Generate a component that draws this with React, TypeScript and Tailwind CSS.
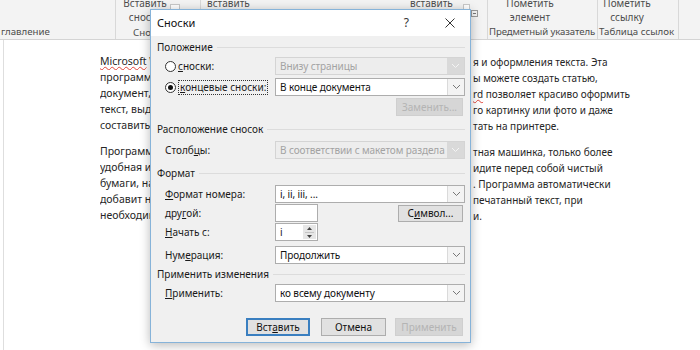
import React from 'react'

const lines1 = [
  { left: 'Microsoft Word – это программа для набора, редактировани', tail: 'я и оформления текста. Эта', wavy: true },
  { left: 'программа очень популярна среди пользователей. С ее помощью в', tail: 'ы можете создать статью,' },
  { left: 'документ, доклад, реферат или курсовую работу. Программа Wo', tail: 'rd позволяет красиво оформить', wavyTail: true },
  { left: 'текст, выделить важные моменты, вставить в не', tail: 'го картинку или фото и даже' },
  { left: 'составить таблицу. Готовый документ можно распеча', tail: 'тать на принтере.' },
]

const lines2 = [
  { left: 'Программа Word – это как современная печа', tail: 'тная машинка, только более' },
  { left: 'удобная и функциональная. Открыв документ, вы ув', tail: 'идите перед собой чистый' },
  { left: 'бумаги, на котором можно набирать любой текст', tail: '. Программа автоматически' },
  { left: 'добавит новую страницу, сохранит и рас', tail: 'печатанный текст, при' },
  { left: 'необходимости проверит орфографию и исправит ошибк', tail: 'и.' },
]

function Chevron() {
  return (
    <svg width="9" height="6" viewBox="0 0 9 6">
      <path d="M1 1 L4.5 4.5 L8 1" fill="none" stroke="currentColor" strokeWidth="1" />
    </svg>
  )
}

function Select({ value, disabled = false }: { value: string; disabled?: boolean }) {
  return (
    <div
      className={`flex h-[18px] w-[190px] border ${
        disabled ? 'border-[#d4d4d4] bg-[#ededed] text-[#a3a3a3]' : 'border-[#adadad] bg-white text-[#111]'
      }`}
    >
      <div className="flex-1 overflow-hidden whitespace-nowrap pl-[4px] leading-[16px] tracking-[-0.1px]">{value}</div>
      <div
        className={`flex w-[17px] shrink-0 items-center justify-center ${
          disabled ? 'bg-[#d9d9d9] text-[#f4f4f4]' : 'border-l border-[#dadada] bg-[#f3f3f3] text-[#777]'
        }`}
      >
        <Chevron />
      </div>
    </div>
  )
}

function Btn({ children, kind = 'normal', className = '' }: { children: React.ReactNode; kind?: 'default' | 'normal' | 'disabled'; className?: string }) {
  const look =
    kind === 'default'
      ? 'border-2 border-[#3a7fc0] bg-[#e1e1e1] text-[#111]'
      : kind === 'disabled'
        ? 'border border-[#cfcfcf] bg-[#d6d6d6] text-[#b4b4b4]'
        : 'border border-[#adadad] bg-[#e1e1e1] text-[#111]'
  return <div className={`flex items-center justify-center ${look} ${className}`}>{children}</div>
}

function Group({ title, className = '' }: { title: string; className?: string }) {
  return (
    <div className={`flex h-[18px] items-center gap-[4px] pl-[6px] ${className}`}>
      <span>{title}</span>
      <div className="h-px flex-1 bg-[#dcdcdc]" />
    </div>
  )
}

function Row({ label, children, className = '' }: { label: React.ReactNode; children: React.ReactNode; className?: string }) {
  return (
    <div className={`flex h-[18px] items-center pl-[14px] ${className}`}>
      <div className="flex w-[110px] shrink-0 items-center">{label}</div>
      {children}
    </div>
  )
}

function Radio({ checked = false }: { checked?: boolean }) {
  return (
    <div className="mr-[2px] flex h-[11px] w-[11px] items-center justify-center rounded-full border border-[#333] bg-white">
      {checked && <div className="h-[5px] w-[5px] rounded-full bg-[#111]" />}
    </div>
  )
}

function DocLine({ left, tail, wavy, wavyTail }: { left: string; tail: string; wavy?: boolean; wavyTail?: boolean }) {
  const first = left.split(' ')[0]
  const rest = left.slice(first.length)
  return (
    <div className="flex h-[16px] items-center whitespace-nowrap">
      <div className="w-[372px] shrink-0 overflow-hidden text-[10.5px]">
        {wavy ? <span className="underline decoration-[#e0443a] decoration-wavy decoration-1">{first}</span> : first}
        {rest}
      </div>
      <div className="ml-[1px]">
        {wavyTail ? (
          <>
            <span className="underline decoration-[#e0443a] decoration-wavy decoration-1">{tail.slice(0, 2)}</span>
            {tail.slice(2)}
          </>
        ) : (
          tail
        )}
      </div>
    </div>
  )
}

function RibbonItem({ top, bottom, className = '' }: { top: string; bottom?: string; className?: string }) {
  return (
    <div className={`flex w-[50px] shrink-0 flex-col items-center ${className}`}>
      <span>{top}</span>
      {bottom && <span>{bottom}</span>}
    </div>
  )
}

export default function App() {
  return (
    <div className="relative h-[350px] w-[700px] overflow-hidden bg-white font-['Noto_Sans',sans-serif]">
      {/* ribbon */}
      <div className="flex h-[40px] whitespace-nowrap border-b border-[#d4d4d4] bg-[#f3f3f3] text-[10px] leading-[14px] text-[#4d4d4d]">
        <div className="flex w-[115px] shrink-0 flex-col justify-end overflow-hidden">
          <span className="pl-[1px] text-[9.7px]">главление</span>
        </div>
        <div className="w-px bg-[#d8d8d8]" />
        <div className="flex w-[371px] shrink-0 flex-col overflow-hidden">
          <div className="-mt-[4px] flex flex-1">
            <RibbonItem top="Вставить" bottom="сноску" className="ml-[4px]" />
            <div className="mt-[8px] h-[6px] w-[10px] border border-[#c8c8c8] bg-white" />
            <div className="ml-[20px] h-[30px] w-px bg-[#d8d8d8]" />
            <span className="ml-[6px] w-[46px]">вставить</span>
            <span className="ml-[157px] w-[46px]">вставить</span>
            <div className="ml-[7px] mt-[8px] h-[6px] w-[7px] border border-[#c8c8c8] bg-white" />
            <div className="ml-[1px] mt-[14px] flex h-[7px] w-[7px] items-center justify-center border border-[#9a9a9a]">
              <div className="h-px w-[3px] bg-[#777]" />
            </div>
          </div>
          <span className="pl-[17px] text-[9.7px]">Сноски</span>
        </div>
        <div className="w-px bg-[#d8d8d8]" />
        <div className="flex w-[109px] shrink-0 flex-col overflow-hidden">
          <div className="-mt-[4px] flex flex-1">
            <RibbonItem top="Пометить" bottom="элемент" className="ml-[17px]" />
          </div>
          <span className="pl-[1px] text-[9.6px] tracking-[-0.1px]">Предметный указатель</span>
        </div>
        <div className="w-px bg-[#d8d8d8]" />
        <div className="flex w-[80px] shrink-0 flex-col overflow-hidden">
          <div className="-mt-[4px] flex flex-1">
            <RibbonItem top="Пометить" bottom="ссылку" className="ml-[4px]" />
          </div>
          <span className="pl-[1px] text-[9.7px]">Таблица ссылок</span>
        </div>
        <div className="w-px bg-[#d8d8d8]" />
        <div className="flex-1" />
      </div>

      {/* document */}
      <div className="ml-[3px] h-[310px] border-l border-[#dedede] pl-[96px] pt-[14px] text-[10px] text-[#262626]">
        <div className="mb-[10px]">
          {lines1.map((l, i) => (
            <DocLine key={i} {...l} />
          ))}
        </div>
        <div>
          {lines2.map((l, i) => (
            <DocLine key={i} {...l} />
          ))}
        </div>
      </div>

      {/* dialog */}
      <div className="absolute left-[150px] top-[9px] z-10 flex h-[334px] w-[321px] flex-col border border-[#86b3d9] bg-[#f0f0f0] text-[10px] text-[#1a1a1a] shadow-[0_2px_10px_rgba(0,0,0,0.28)]">
        <div className="flex h-[26px] shrink-0 items-center bg-white pl-[6px] pr-[15px]">
          <span className="text-[11px] text-[#111]">Сноски</span>
          <span className="ml-auto mr-[36px] text-[12px] text-[#333]">?</span>
          <svg width="10" height="10" viewBox="0 0 10 10">
            <path d="M0.5 0.5 L9.5 9.5 M9.5 0.5 L0.5 9.5" stroke="#333" strokeWidth="1" />
          </svg>
        </div>

        <div className="flex flex-col pr-[5px]">
          <Group title="Положение" className="mt-[2px]" />
          <Row
            className="mt-[1px]"
            label={
              <>
                <Radio />
                <span>
                  <u>с</u>носки:
                </span>
              </>
            }
          >
            <Select value="Внизу страницы" disabled />
          </Row>
          <Row
            className="mt-[3px]"
            label={
              <>
                <Radio checked />
                <span className="border border-dotted border-[#333] px-[1px] leading-[13px]">
                  <u>к</u>онцевые сноски:
                </span>
              </>
            }
          >
            <Select value="В конце документа" />
          </Row>
          <div className="mt-[2px] flex justify-end">
            <Btn kind="disabled" className="mr-[2px] h-[18px] w-[67px]">
              Заменить...
            </Btn>
          </div>

          <Group title="Расположение сносок" className="mt-[4px]" />
          <Row
            className="mt-[3px]"
            label={
              <span>
                Столб<u>ц</u>ы:
              </span>
            }
          >
            <Select value="В соответствии с макетом раздела" disabled />
          </Row>

          <Group title="Формат" className="mt-[5px]" />
          <Row
            className="mt-[3px]"
            label={
              <span>
                <u>Ф</u>ормат номера:
              </span>
            }
          >
            <Select value="i, ii, iii, ..." />
          </Row>
          <Row
            className="mt-[1px]"
            label={
              <span>
                дру<u>г</u>ой:
              </span>
            }
          >
            <div className="h-[18px] w-[43px] border border-[#adadad] bg-white" />
            <Btn className="ml-auto mr-[2px] h-[17px] w-[65px]">
              <span>
                С<u>и</u>мвол...
              </span>
            </Btn>
          </Row>
          <Row
            className="mt-[1px]"
            label={
              <span>
                <u>Н</u>ачать с:
              </span>
            }
          >
            <div className="flex h-[18px] w-[43px] border border-[#adadad] bg-white">
              <span className="flex-1 pl-[4px] leading-[16px]">i</span>
              <div className="my-[1px] mr-[1px] flex w-[13px] flex-col items-center justify-center gap-[2px] bg-[#e6e6e6]">
                <svg width="5" height="3" viewBox="0 0 5 3">
                  <path d="M0 3 L2.5 0 L5 3 Z" fill="#444" />
                </svg>
                <div className="h-px w-[9px] bg-[#c4c4c4]" />
                <svg width="5" height="3" viewBox="0 0 5 3">
                  <path d="M0 0 L2.5 3 L5 0 Z" fill="#444" />
                </svg>
              </div>
            </div>
          </Row>
          <Row
            className="mt-[5px]"
            label={
              <span>
                Нум<u>е</u>рация:
              </span>
            }
          >
            <Select value="Продолжить" />
          </Row>

          <Group title="Применить изменения" className="mt-[1px]" />
          <Row
            className="mt-[1px]"
            label={
              <span>
                <u>П</u>рименить:
              </span>
            }
          >
            <Select value="ко всему документу" />
          </Row>

          <div className="mt-[16px] flex justify-end">
            <Btn kind="default" className="h-[18px] w-[64px]">
              <span>
                Вст<u>а</u>вить
              </span>
            </Btn>
            <Btn className="ml-[11px] h-[18px] w-[65px]">Отмена</Btn>
            <Btn kind="disabled" className="ml-[9px] mr-[2px] h-[18px] w-[68px]">
              Применить
            </Btn>
          </div>
        </div>
      </div>
    </div>
  )
}
